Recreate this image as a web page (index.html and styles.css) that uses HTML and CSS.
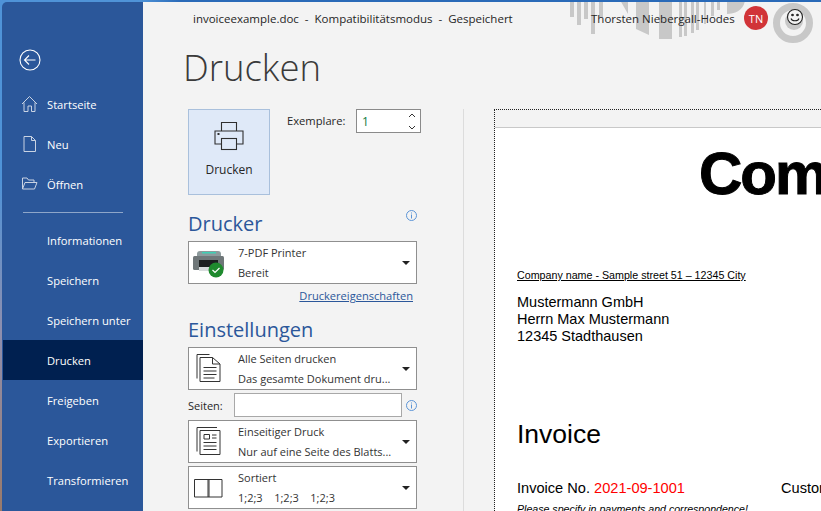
FILE: index.html
```html
<!DOCTYPE html>
<html lang="de">
<head>
<meta charset="utf-8">
<title>Drucken</title>
<link rel="stylesheet" href="styles.css">
</head>
<body>
<div class="window">
  <nav class="side">
    <div class="back">
      <svg width="22" height="22" viewBox="0 0 22 22" fill="none" stroke="#fff" stroke-width="1.1"><circle cx="11" cy="11" r="10"/><path d="M16.5 11H5.5M10 6.5 5.5 11l4.5 4.5"/></svg>
    </div>
    <a class="item"><span class="ico"><svg width="18" height="18" viewBox="0 0 18 18" fill="none" stroke="#c9d3e3" stroke-width="1"><path d="M1 9 8.5 1.5 16 9M3 7.5V16.500H7V11H10.500V16.500H14V7.500"/></svg></span>Startseite</a>
    <a class="item"><span class="ico"><svg width="18" height="18" viewBox="0 0 18 18" fill="none" stroke="#c9d3e3" stroke-width="1"><path d="M3 1.500H10.500L14.500 5.500V16.500H3ZM10.500 1.500V5.500H14.500"/></svg></span>Neu</a>
    <a class="item"><span class="ico"><svg width="18" height="18" viewBox="0 0 18 18" fill="none" stroke="#c9d3e3" stroke-width="1"><path d="M1.500 14V3H6L7.500 5H13V7.500M1.500 14H13.500L16 7.500H4L1.500 14Z"/></svg></span>Öffnen</a>
    <div class="sep"></div>
    <a class="item">Informationen</a>
    <a class="item">Speichern</a>
    <a class="item">Speichern unter</a>
    <a class="item active">Drucken</a>
    <a class="item">Freigeben</a>
    <a class="item">Exportieren</a>
    <a class="item">Transformieren</a>
  </nav>
  <main class="main">
    <svg class="deco" width="300" height="46" viewBox="0 0 300 46" fill="#c8c8c8">
      <rect x="27" y="0" width="4" height="17"/><rect x="34" y="0" width="4" height="25"/><rect x="41" y="0" width="4" height="19"/><rect x="48" y="0" width="4" height="34"/><rect x="56" y="0" width="4" height="17"/>
      <path d="M77 0H85V14ZM93 0H106V35L93 29ZM116 0H129V39H116ZM136 0H139V37H136ZM141 0H144V36H141ZM148 0H151V33H148ZM153 0H156V30H153ZM161 0H163V24H161ZM168 0H171V16H168ZM174 0H177V10H174ZM184 0H202C201 10 192 14 184 14Z"/>
      <circle cx="250" cy="23" r="16.500" fill="none" stroke="#c8c8c8" stroke-width="7"/><circle cx="251" cy="21" r="9"/>
    </svg>
    <header class="top">
      <div class="doc">invoiceexample.doc&nbsp; - &nbsp;Kompatibilitätsmodus&nbsp; - &nbsp;Gespeichert</div>
      <div class="user">Thorsten Niebergall-Hodes</div>
      <div class="badge">TN</div>
      <svg class="smile" width="18" height="18" viewBox="0 0 18 18" fill="none" stroke="#222" stroke-width="1.100"><circle cx="9" cy="9" r="7.500" fill="#f3f3f3"/><circle cx="6.500" cy="7" r=".8" fill="#222"/><circle cx="11.500" cy="7" r=".8" fill="#222"/><path d="M5 10.500C6 13.500 12 13.500 13 10.500"/></svg>
    </header>
    <h1 class="title">Drucken</h1>
    <div class="content">
      <section class="panel">
        <div class="print-row">
          <button class="print-btn">
            <svg width="32" height="30" viewBox="0 0 32 30" fill="none" stroke="#2f2f2f" stroke-width="1.100"><path d="M8.500 10V1.500H23.500V10M8 23H2V10H30V23H24"/><rect x="8.500" y="17.500" width="15" height="11" fill="none"/><rect x="4.500" y="12" width="2" height="2" fill="#2f2f2f" stroke="none"/></svg>
            <span>Drucken</span>
          </button>
          <div class="copies">
            <label>Exemplare:</label>
            <div class="spin"><span class="val">1</span><span class="arrows"><svg width="8" height="20" viewBox="0 0 8 20" fill="none" stroke="#333"><path d="M1 6 4 3l3 3M1 15l3 3 3-3"/></svg></span></div>
          </div>
        </div>
        <div class="sec-head"><h2>Drucker</h2><svg class="info" width="11" height="11" viewBox="0 0 11 11" fill="none" stroke="#5b94d6"><circle cx="5.500" cy="5.500" r="5"/><path d="M5.500 4.500V8.500M5.500 2.500V3.500"/></svg></div>
        <div class="drop">
          <span class="dico">
            <svg width="34" height="30" viewBox="0 0 34 30"><path d="M5 6C5 4 6 3 8 3H26C28 3 29 4 29 6V8H5Z" fill="#8d9a9c"/><rect x="10" y="4" width="14" height="1.500" fill="#3fd0b5"/><rect x="1" y="8" width="31" height="14" rx="1.500" fill="#6f7779"/><rect x="7" y="12" width="19" height="7" fill="#1c1f20"/><rect x="7" y="19" width="19" height="4" fill="#d8dcdd"/><circle cx="24" cy="22" r="7.500" fill="#1f8a2e"/><path d="M20.500 22 23 24.500 27.500 20" fill="none" stroke="#fff" stroke-width="1.200"/></svg>
          </span>
          <span class="dtext"><span>7-PDF Printer</span><span>Bereit</span></span>
          <span class="caret"></span>
        </div>
        <div class="link-row"><a class="link">Druckereigenschaften</a></div>
        <h2 class="h2b">Einstellungen</h2>
        <div class="drop">
          <span class="dico">
            <svg width="34" height="30" viewBox="1.500 2 34 30" fill="none" stroke="#333"><path d="M6.500 26.500V2.500H19M9.500 29.500V5.500H22L29.500 12V29.500ZM22 5.500V12H29.500M13 15.500H26M13 19H26M13 22.500H26M13 26H24"/></svg>
          </span>
          <span class="dtext"><span>Alle Seiten drucken</span><span>Das gesamte Dokument dru...</span></span>
          <span class="caret"></span>
        </div>
        <div class="pages">
          <label>Seiten:</label>
          <div class="pages-input"></div>
          <svg class="info2" width="11" height="11" viewBox="0 0 11 11" fill="none" stroke="#5b94d6"><circle cx="5.500" cy="5.500" r="5"/><path d="M5.500 4.500V8.500M5.500 2.500V3.500"/></svg>
        </div>
        <div class="drop">
          <span class="dico">
            <svg width="34" height="30" viewBox="1.500 2 34 30" fill="none" stroke="#333"><path d="M6.500 26.500V2.500H26.500M9.500 29.500V5.500H29.500V29.500ZM13.500 9.500H19V14H13.500ZM21.500 10H26M21.500 13H26M13 17.500H26M13 21H26M13 24.500H26"/></svg>
          </span>
          <span class="dtext"><span>Einseitiger Druck</span><span>Nur auf eine Seite des Blatts...</span></span>
          <span class="caret"></span>
        </div>
        <div class="drop d4">
          <span class="dico">
            <svg width="34" height="30" viewBox="0 0 34 30" fill="none" stroke="#333"><path d="M2.500 6.500H30V24H2.500ZM16 6.500V24M17 6.500V24"/></svg>
          </span>
          <span class="dtext"><span>Sortiert</span><span class="coll"><span>1;2;3</span><span>1;2;3</span><span>1;2;3</span></span></span>
          <span class="caret"></span>
        </div>
      </section>
      <section class="preview">
        <div class="band"></div>
        <div class="page">
          <div class="company">Com</div>
          <div class="sender">Company name - Sample street 51 – 12345 City</div>
          <div class="addr">Mustermann GmbH<br>Herrn Max Mustermann<br>12345 Stadthausen</div>
          <div class="inv">Invoice</div>
          <div class="no"><span class="no-l">Invoice No. <em>2021-09-1001</em></span><span>Customer</span></div>
          <div class="note">Please specify in payments and correspondence!</div>
        </div>
      </section>
    </div>
  </main>
</div>
</body>
</html>
```
FILE: styles.css
```css
* { box-sizing: border-box; }
html, body { margin: 0; height: 100%; overflow: hidden; }
body {
  width: 821px; height: 511px;
  padding: 2px 0 0 2px;
  background:
    linear-gradient(90deg, #4f93d8 0, #4f93d8 17%, #2a6ab8 22%) 0 0 / 100% 2px no-repeat,
    linear-gradient(180deg, #4f93d8 0, #4f93d8 35%, #8f8fae 65%, #9a7a6a 100%);
  font-family: "Open Sans", "Noto Sans", sans-serif;
  font-size: 12px;
  color: #262626;
}
.window { display: flex; height: 509px; width: 819px; }
.side {
  width: 141px; flex: none;
  background: #2b579a;
  border-top-left-radius: 5px;
  padding-top: 40px;
  color: #fff;
  overflow: hidden;
}
.back { height: 35px; padding-left: 17px; margin-bottom: 7px; display: flex; align-items: center; }
.item {
  height: 40px; display: flex; align-items: center;
  padding-left: 45px; position: relative;
  font-size: 11.2px; color: #fff;
}
.item.active { background: #002050; margin-left: 1px; padding-left: 44px; }
.ico { width: 18px; height: 18px; margin-left: -26px; margin-right: 8px; display: block; }
.sep { height: 1px; background: #8ea6c9; margin: 8px 20px 7px 21px; }
.main { flex: 1; position: relative; background: #f3f3f3; overflow: hidden; min-width: 0; }
.deco { position: absolute; left: 400px; top: -2px; }
.top { position: relative; height: 32px; display: flex; align-items: center; padding-left: 50px; }
.doc { width: 398px; font-size: 11.5px; }
.user { width: 153px; font-size: 11.5px; white-space: nowrap; }
.badge {
  width: 24px; height: 24px; border-radius: 50%; background: #d13438;
  color: #fff; font-size: 11px; display: flex; align-items: center; justify-content: center;
}
.smile { margin-left: 18px; margin-top: -2px; }
.title { margin: 0; height: 75px; padding: 4px 0 0 40px; font-size: 36.5px; line-height: 58px; font-weight: 300; color: #3a3a3a; }
.content { display: flex; height: 402px; }
.panel { width: 321px; padding: 0 0 0 45px; border-right: 1px solid #dcdcdc; margin-right: 30px; flex: none; }
.print-row { display: flex; height: 86px; }
.print-btn {
  width: 82px; height: 86px; flex: none;
  background: #dfe9f8; border: 1px solid #a9c0dc; padding: 11px 0 0;
  display: flex; flex-direction: column; align-items: center; gap: 10px;
  font: inherit; font-size: 12px; color: #262626;
}
.copies { display: flex; align-items: flex-start; margin-left: 17px; }
.copies label { width: 69px; line-height: 24px; white-space: nowrap; font-size: 11.2px; }
.spin { width: 65px; height: 24px; background: #fff; border: 1px solid #8a8a8a; display: flex; justify-content: space-between; align-items: center; padding: 0 4px 0 5px; }
.val { color: #107c41; font-size: 12px; }
.arrows { display: block; height: 20px; }
.sec-head { position: relative; height: 46px; padding-top: 15px; }
h2, .h2b { margin: 0; font-size: 20px; line-height: 28px; font-weight: 400; color: #2b579a; }
.info { position: absolute; left: 218px; top: 15px; }
.drop {
  width: 229px; height: 43px; background: #fff; border: 1px solid #8f8f8f;
  display: flex; align-items: center; position: relative;
}
.dico { width: 49px; padding-left: 3px; display: block; height: 30px; flex: none; }
.dtext { display: flex; flex-direction: column; font-size: 11px; line-height: 20px; color: #333; white-space: nowrap; }
.coll { display: flex; gap: 11.5px; }
.caret { position: absolute; right: 6px; top: 19px; width: 0; height: 0; border: 4px solid transparent; border-top: 4px solid #222; border-bottom: 0; }
.link-row { width: 225px; text-align: right; height: 28px; line-height: 24px; font-size: 11.1px; color: #2b579a; }
.link { text-decoration: underline; }
.h2b { height: 35px; line-height: 36px; }
.pages { display: flex; align-items: center; height: 30px; width: 240px; }
.pages label { width: 46px; font-size: 11px; }
.pages-input { width: 168px; height: 24px; background: #fff; border: 1px solid #a8a8a8; }
.info2 { margin-left: 4px; }
.d4 { margin-top: 3px; }
.preview { flex: 1; min-width: 0; border-left: 1px dotted #222; border-top: 1px dotted #222; overflow: hidden; height: 402px; }
.band { height: 18px; border-bottom: 1px solid #c8c8c8; background: #f3f3f3; }
.page { background: #fff; height: 384px; font-family: "Liberation Sans", Arial, sans-serif; color: #000; padding-left: 22px; white-space: nowrap; overflow: hidden; }
.company { font-size: 60px; font-weight: 700; letter-spacing: -2px; -webkit-text-stroke: 1px #000; line-height: 70px; padding: 11px 0 0 182px; height: 85px; color: #000; }
.sender { margin-top: 56px; font-size: 10.7px; line-height: 13px; text-decoration: underline; }
.addr { margin-top: 12px; font-size: 14.5px; line-height: 17px; }
.inv { margin-top: 72px; font-size: 26.5px; line-height: 34px; }
.no { margin-top: 29px; font-size: 14.6px; line-height: 17px; display: flex; }
.no-l { width: 264px; flex: none; }
.no em { font-style: normal; color: #f00; }
.note { margin-top: 6px; font-size: 10.6px; font-style: italic; line-height: 12px; }
```
